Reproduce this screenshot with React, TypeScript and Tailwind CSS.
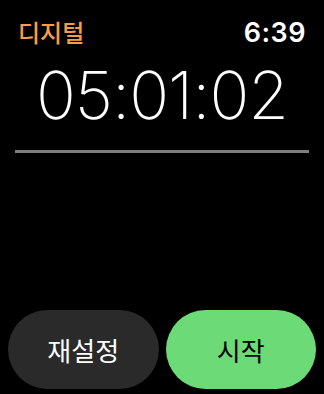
export default function App() {
  return (
    <div
      className="w-[324px] h-[394px] bg-black flex flex-col overflow-hidden"
      style={{ fontFamily: "Inter, 'Noto Sans CJK KR', sans-serif" }}
    >
      {/* Header */}
      <div className="flex justify-between items-center px-[18px] pt-[14px] h-[50px]">
        <span className="text-[24px] font-medium text-[#f0a04c] leading-none" style={{ fontFamily: "'Noto Sans CJK KR', sans-serif" }}>
          디지털
        </span>
        <span className="text-[27px] font-semibold text-white leading-none tracking-[0.5px]">6:39</span>
      </div>

      {/* Stopwatch */}
      <div className="flex justify-center mt-[12px]">
        <span className="text-[66px] font-extralight text-white leading-none tracking-[-1px]">05:01:02</span>
      </div>

      <div className="mx-[15px] mt-[22px] h-[3px] bg-[#7f7f7f]" />

      <div className="flex-1" />

      {/* Buttons */}
      <div className="flex gap-[7px] px-[8px] pb-[5px]">
        <button className="flex-1 h-[79px] rounded-full bg-[#2a2a2a] text-white text-[26px] font-normal" style={{ fontFamily: "'Noto Sans CJK KR', sans-serif" }}>
          재설정
        </button>
        <button className="flex-1 h-[79px] rounded-full bg-[#6bda77] text-black text-[26px] font-normal" style={{ fontFamily: "'Noto Sans CJK KR', sans-serif" }}>
          시작
        </button>
      </div>
    </div>
  );
}
